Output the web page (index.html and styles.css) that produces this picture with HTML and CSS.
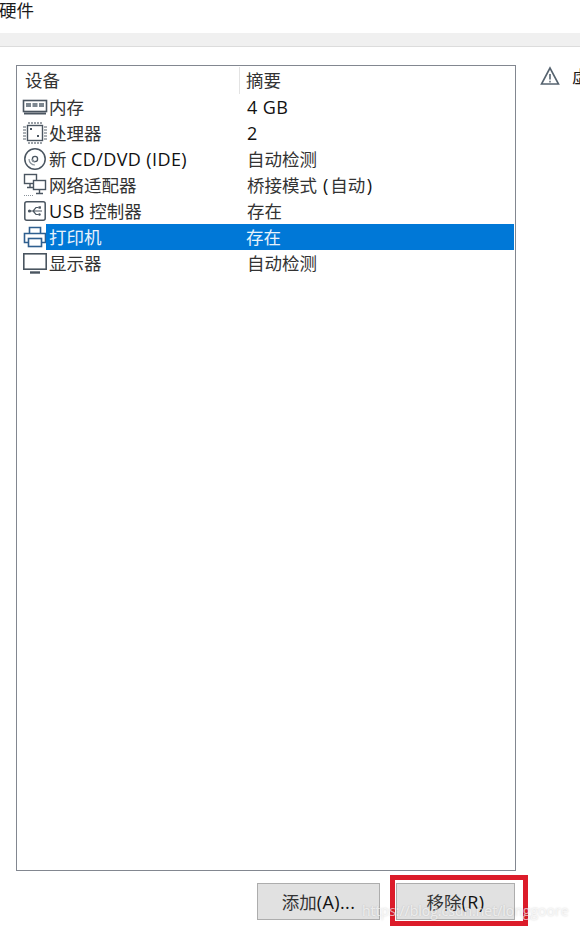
FILE: index.html
```html
<!DOCTYPE html>
<html lang="zh-CN">
<head>
    <meta charset="UTF-8">
    <meta name="viewport" content="width=device-width, initial-scale=1.0">
    <title>硬件</title>
    <link rel="stylesheet" href="styles.css">
</head>
<body>

<div class="title">硬件</div>
<div class="title-bar"></div>

<div class="content">
    <div class="left">
        <div class="device-list">
            <div class="list-head">
                <div class="col-device">设备</div>
                <div class="col-summary">摘要</div>
            </div>

            <div class="row">
                <svg class="icon" viewBox="0 0 26 20"><rect x="1.5" y="3.5" width="23" height="11" fill="none" stroke="#4a5560" stroke-width="1.6"/><rect x="4" y="6" width="5" height="4" fill="#7d8790"/><rect x="10.5" y="6" width="5" height="4" fill="#7d8790"/><rect x="17" y="6" width="5" height="4" fill="#7d8790"/><path d="M2 16.5h22" stroke="#4a5560" stroke-width="2"/></svg>
                <div class="name">内存</div>
                <div class="summary"><span class="latin">4 GB</span></div>
            </div>
            <div class="row">
                <svg class="icon" viewBox="0 0 26 24"><rect x="5.5" y="4.5" width="15" height="15" fill="none" stroke="#4a5560" stroke-width="1.4"/><rect x="8" y="7" width="2" height="2" fill="#4a5560"/><rect x="15" y="14" width="2" height="2" fill="#4a5560"/><path d="M7 1v2M10 1v2M13 1v2M16 1v2M19 1v2M7 21v2M10 21v2M13 21v2M16 21v2M19 21v2M1 6h3M1 9h3M1 12h3M1 15h3M1 18h3M22 6h3M22 9h3M22 12h3M22 15h3M22 18h3" stroke="#5a646e" stroke-width="1.2"/></svg>
                <div class="name">处理器</div>
                <div class="summary"><span class="latin">2</span></div>
            </div>
            <div class="row">
                <svg class="icon" viewBox="0 0 26 24"><circle cx="13" cy="12" r="10.2" fill="none" stroke="#4a5560" stroke-width="1.5"/><circle cx="13" cy="12" r="2.6" fill="none" stroke="#4a5560" stroke-width="1.3"/><path d="M7 12a6 6 0 0 0 6 6M10 12a3 3 0 0 0 3 3" fill="none" stroke="#8a939b" stroke-width="1.2"/></svg>
                <div class="name">新 <span class="latin">CD/DVD (IDE)</span></div>
                <div class="summary">自动检测</div>
            </div>
            <div class="row">
                <svg class="icon" viewBox="0 0 26 24"><rect x="2.5" y="1.5" width="12" height="9" fill="#fff" stroke="#4a5560" stroke-width="1.4"/><rect x="11.5" y="7.5" width="12" height="9" fill="#fff" stroke="#4a5560" stroke-width="1.4"/><path d="M17.5 17v3M14 20.5h7M8 11v3M5 14.5h6" stroke="#4a5560" stroke-width="1.4"/><path d="M2 22.5h10" stroke="#8a939b" stroke-dasharray="1 1"/></svg>
                <div class="name">网络适配器</div>
                <div class="summary">桥接模式 <span class="latin paren">(</span>自动<span class="latin paren">)</span></div>
            </div>
            <div class="row">
                <svg class="icon" viewBox="0 0 26 24"><rect x="2.8" y="2.8" width="20.4" height="18.4" rx="2" fill="none" stroke="#4a5560" stroke-width="1.5"/><path d="M8 12h12M16.5 8.5h-2.5L11 12l3 3.5h2.5" fill="none" stroke="#4a5560" stroke-width="1.2"/><circle cx="7.5" cy="12" r="1.6" fill="#4a5560"/><circle cx="17.5" cy="15.5" r="1.2" fill="#4a5560"/><rect x="16.5" y="7.3" width="2.4" height="2.4" fill="#4a5560"/></svg>
                <div class="name"><span class="latin">USB</span> 控制器</div>
                <div class="summary">存在</div>
            </div>
            <div class="row row-selected">
                <svg class="icon" viewBox="0 0 26 24"><path d="M7.5 8V2.5h11V8" fill="none" stroke="#2f5f8f" stroke-width="1.6"/><path d="M6.5 17.5H2.5V8.5h21v9h-4" fill="none" stroke="#2f5f8f" stroke-width="1.6"/><rect x="6.5" y="13.5" width="13" height="8" fill="none" stroke="#2f5f8f" stroke-width="1.6"/></svg>
                <div class="name">打印机</div>
                <div class="summary">存在</div>
            </div>
            <div class="row">
                <svg class="icon" viewBox="0 0 26 24"><rect x="1.8" y="2.8" width="22.4" height="15.4" fill="none" stroke="#4a5560" stroke-width="1.6"/><path d="M8 21.5h10" stroke="#4a5560" stroke-width="2.4"/></svg>
                <div class="name">显示器</div>
                <div class="summary">自动检测</div>
            </div>
        </div>

        <div class="buttons">
            <button class="btn btn-add">添加<span class="latin">(A)...</span></button>
            <button class="btn btn-remove">移除<span class="latin">(R)</span></button>
        </div>
    </div>

    <div class="right">
        <svg class="warn-icon" viewBox="0 0 20 20"><path d="M10 2 1.5 18h17z" fill="none" stroke="#56636f" stroke-width="1.6"/><path d="M10 8v5.5" stroke="#56636f" stroke-width="1.6"/><path d="M10 14.8v1.6" stroke="#56636f" stroke-width="1.4"/></svg>
        <span class="warn-text">虚拟机</span>
    </div>
</div>

<div class="highlight"></div>
<div class="watermark">https://blog.csdn.net/longgoore</div>

</body>
</html>
```

FILE: styles.css
```css
* {
    margin: 0;
    padding: 0;
    box-sizing: border-box;
    font-family: "Open Sans", "Noto Sans CJK SC", sans-serif;
}

html, body {
    width: 580px;
    height: 929px;
    overflow: hidden;
}

body {
    position: relative;
    background-color: #ffffff;
    color: #333;
    font-size: 17.5px;
}

.title {
    height: 33px;
    margin-left: -1px;
    color: #1a1a1a;
    line-height: 21px;
}

.title-bar {
    height: 14px;
    background-color: #f0f0f0;
    border-bottom: 1px solid #dcdcdc;
}

.content {
    display: flex;
    padding: 18px 0 0 16px;
}

.left {
    width: 500px;
    flex-shrink: 0;
}

.device-list {
    height: 806px;
    border: 1px solid #828790;
    padding-top: 1px;
}

.list-head {
    display: flex;
    height: 27px;
    line-height: 27px;
}

.col-device {
    width: 223px;
    padding-left: 8px;
    border-right: 1px solid #e3e3e3;
}

.col-summary {
    padding-left: 6px;
}

.row {
    display: flex;
    align-items: center;
    height: 26px;
    padding-left: 5px;
}

.icon {
    width: 26px;
    height: 24px;
    flex-shrink: 0;
}

.name {
    flex: 1;
    height: 26px;
    padding-left: 3px;
    margin-left: -2px;
    line-height: 26px;
}

.summary {
    width: 268px;
    height: 26px;
    line-height: 26px;
}

.latin {
    color: #111;
    font-size: 18px;
    font-weight: 500;
    letter-spacing: 0.4px;
}

.paren {
    padding: 0 1.5px;
}

.row-selected {
    padding-right: 1px;
}

.row-selected .name,
.row-selected .summary {
    background-color: #0078d7;
    color: #e8f2fb;
}

.buttons {
    display: flex;
    justify-content: flex-end;
    gap: 16px;
    margin-top: 12px;
}

.btn {
    height: 37px;
    background-color: #e1e1e1;
    border: 1px solid #adadad;
    color: #333;
    font-size: 17.5px;
}

.btn-add {
    width: 123px;
}

.btn-remove {
    width: 119px;
    margin-right: 1px;
}

.right {
    display: flex;
    flex: 1;
    min-width: 0;
    align-items: flex-start;
    gap: 12px;
    padding: 1px 0 0 24px;
    overflow: hidden;
    white-space: nowrap;
}

.warn-icon {
    width: 20px;
    height: 20px;
    flex-shrink: 0;
}

.warn-text {
    color: #1a1a1a;
    line-height: 20px;
}

/* red box drawn on top of the screenshot */
.highlight {
    position: absolute;
    left: 390px;
    top: 875px;
    width: 138px;
    height: 51px;
    border: 5px solid #dc1c2a;
}

.watermark {
    position: absolute;
    left: 362px;
    top: 901px;
    color: rgba(255, 255, 255, 0.65);
    font-size: 14px;
    line-height: 20px;
    text-shadow: 0 0 2px rgba(0, 0, 0, 0.18);
    white-space: nowrap;
}
```
